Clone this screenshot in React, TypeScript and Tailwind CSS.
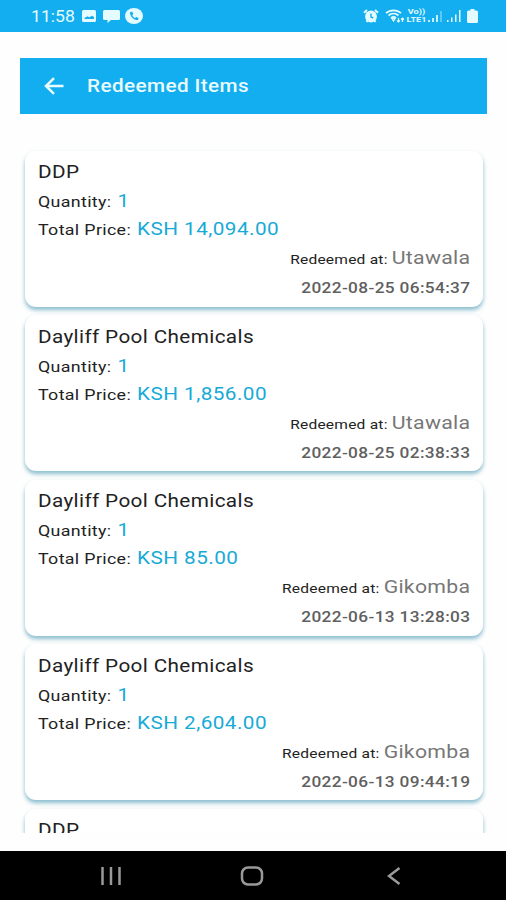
import React from 'react';

interface RedeemedItem {
  name: string;
  details?: {
    quantity: number;
    price: string;
    branch: string;
    date: string;
  };
}

const items: RedeemedItem[] = [
  { name: 'DDP', details: { quantity: 1, price: '14,094.00', branch: 'Utawala', date: '2022-08-25 06:54:37' } },
  { name: 'Dayliff Pool Chemicals', details: { quantity: 1, price: '1,856.00', branch: 'Utawala', date: '2022-08-25 02:38:33' } },
  { name: 'Dayliff Pool Chemicals', details: { quantity: 1, price: '85.00', branch: 'Gikomba', date: '2022-06-13 13:28:03' } },
  { name: 'Dayliff Pool Chemicals', details: { quantity: 1, price: '2,604.00', branch: 'Gikomba', date: '2022-06-13 09:44:19' } },
  { name: 'DDP' },
];

const StatusBar: React.FC = () => (
  <div className="flex h-8 shrink-0 items-center justify-between bg-[#12aeef] pl-[31px] pr-[28px] text-[#e4fbff]">
    <div className="flex items-center">
      <span className="w-[51px] origin-left scale-x-110 pt-[2px] text-[16px] leading-8">11:58</span>
      <svg className="h-[12px] w-[14px]" viewBox="0 0 14 12">
        <path fill="currentColor" fillRule="evenodd" d="M1.500 0h11Q14 0 14 1.500v9q0 1.500-1.500 1.500h-11Q0 12 0 10.500v-9Q0 0 1.500 0ZM2.500 9h9.500V7L10 5.800 7.200 7.300 5.500 6.300 2.500 8Z" />
      </svg>
      <svg className="ml-[7px] h-[13px] w-[17px]" viewBox="0 0 17 13">
        <path fill="currentColor" d="M1.500 0h14Q17 0 17 1.500v7q0 1.500-1.500 1.500H8l-3.500 3v-3h-3Q0 10 0 8.500v-7Q0 0 1.500 0Z" />
      </svg>
      <svg className="ml-[5px] h-[16px] w-[18px]" viewBox="0 0 18 16" preserveAspectRatio="none">
        <ellipse cx="9" cy="8" rx="9" ry="8" fill="currentColor" />
        <path d="M5 4.200c0 4.500 3.500 7.800 8 7.800l.5-2-2.300-1-1.200 1C8.500 9.300 7.600 8.200 7.300 7l1-1.200L7 3.500Z" fill="#12aeef" />
      </svg>
    </div>
    <div className="flex items-center">
      <svg className="h-[14px] w-[16px]" viewBox="0 0 16 14">
        <circle cx="8" cy="7.500" r="5.900" fill="currentColor" />
        <path d="M1 3.800 4 1M15 3.800 12 1M3.500 13l1.200-1.800M12.500 13l-1.200-1.800" stroke="currentColor" strokeWidth="2" />
        <path d="M8 4.500V8l2.200 1" stroke="#12aeef" strokeWidth="1.400" fill="none" />
      </svg>
      <svg className="ml-[6px] h-[14px] w-[20px]" viewBox="0 0 20 14" fill="none" stroke="currentColor">
        <path d="M1 4.200C5 .5 12 .5 16 4.200M3.500 6.500c3-2.600 7-2.600 10 0M6 9c1.700-1.500 3.500-1.500 5 0" strokeWidth="1.700" />
        <path d="M7 9.500h3L8.500 12ZM13.500 9v4M12 11.500l1.500 1.500 1.500-1.500M17.500 13V9M16 10.500 17.500 9l1.500 1.500" strokeWidth="1.200" />
      </svg>
      <div className="ml-[2px] flex w-[19px] scale-x-130 flex-col items-center text-[7px] leading-[8px] font-bold">
        <span>Vo))</span>
        <span>LTE1</span>
      </div>
      <svg className="ml-[2px] h-[12px] w-[14px]" viewBox="0 0 14 12" fill="currentColor">
        <path d="M0 10h2v2H0ZM4 8h2v4H4ZM8 5h2v7H8Z" opacity=".85" />
        <path d="M12 1h2v11h-2Z" opacity=".35" />
      </svg>
      <svg className="ml-[5px] h-[12px] w-[14px]" viewBox="0 0 14 12" fill="currentColor">
        <path d="M0 10h1.500v2H0ZM4 7.500h1.500V12H4ZM8 4.500h1.500V12H8ZM12 0h1.500v12H12Z" />
      </svg>
      <svg className="ml-[6px] h-[14px] w-[11px]" viewBox="0 0 11 14">
        <path fill="currentColor" d="M3.500 0h4v1.500H9.500Q11 1.500 11 3v9.500q0 1.500-1.500 1.500h-8Q0 14 0 12.500V3q0-1.500 1.500-1.500h2Z" />
      </svg>
    </div>
  </div>
);

const ItemCard: React.FC<{ item: RedeemedItem }> = ({ item }) => (
  <div className="h-[156px] shrink-0 rounded-[11px] bg-white px-[12.500px] pt-[6.500px] shadow-[0_3px_4px_rgba(60,145,175,0.6)]">
    {/* glyphs are wide, so the text block is laid out narrow and stretched */}
    <div className="w-[376px] origin-left scale-x-115 whitespace-nowrap text-[#222]">
      <h2 className="h-[29px] text-[18px] leading-[29px] tracking-[0.33px]">{item.name}</h2>
      {item.details && (
        <>
          <p className="h-[29px] text-[15.500px] leading-[29px] tracking-[0.300px]">
            Quantity: <span className="ml-px text-[18px] text-[#18aad6]">{item.details.quantity}</span>
          </p>
          <p className="h-[28px] text-[15.500px] leading-[28px] tracking-[0.300px]">
            Total Price: <span className="ml-px text-[18px] tracking-[0.4px] text-[#18aad6]">KSH {item.details.price}</span>
          </p>
          <p className="h-[29px] text-right text-[13.500px] leading-[30px] tracking-[0.200px]">
            Redeemed at: <span className="text-[18.500px] tracking-[0.25px] text-[#777]">{item.details.branch}</span>
          </p>
          <p className="text-right text-[15px] leading-[32px] font-medium tracking-[0.31px] text-[#606060]">{item.details.date}</p>
        </>
      )}
    </div>
  </div>
);

const App: React.FC = () => {
  return (
    <div className="flex h-[900px] w-[506px] flex-col overflow-hidden bg-[#fefefe] font-['Roboto',sans-serif]">
      <StatusBar />

      <header className="mt-[26px] mr-[19px] ml-[20px] flex h-[56px] shrink-0 items-center bg-[#12aeef] pl-[24px] text-[#e9fbff]">
        <svg className="h-[18px] w-[20px]" viewBox="0 0 20 18" fill="none" stroke="currentColor" strokeWidth="2.500">
          <path d="M19.500 9H2M10 1.200 2 9l8 7.800" />
        </svg>
        <h1 className="ml-[23px] origin-left scale-x-115 pb-[2px] text-[18px] font-medium tracking-[0.350px]">Redeemed Items</h1>
      </header>

      <main className="mt-[30px] flex h-[689px] shrink-0 flex-col gap-[8.600px] overflow-hidden pt-[6.500px] pr-[23.500px] pl-[25px]">
        {items.map((item, idx) => (
          <ItemCard key={idx} item={item} />
        ))}
      </main>

      <nav className="mt-auto flex h-[49px] shrink-0 items-center bg-black pl-[101px] text-[#999]">
        <svg className="h-[18px] w-[20px]" viewBox="0 0 20 18" stroke="currentColor" strokeWidth="2.500">
          <path d="M1.500 0v18M10 0v18M18.500 0v18" />
        </svg>
        <svg className="ml-[119px] h-[20px] w-[24px]" viewBox="0 0 24 20" fill="none" stroke="currentColor" strokeWidth="2.500">
          <rect x="2" y="1.500" width="20" height="17" rx="6" />
        </svg>
        <svg className="ml-[123px] h-[18px] w-[14px]" viewBox="0 0 14 18" fill="none" stroke="currentColor" strokeWidth="2.500">
          <path d="M12.500 1 2 9l10.500 8" />
        </svg>
      </nav>
    </div>
  );
};

export default App;
